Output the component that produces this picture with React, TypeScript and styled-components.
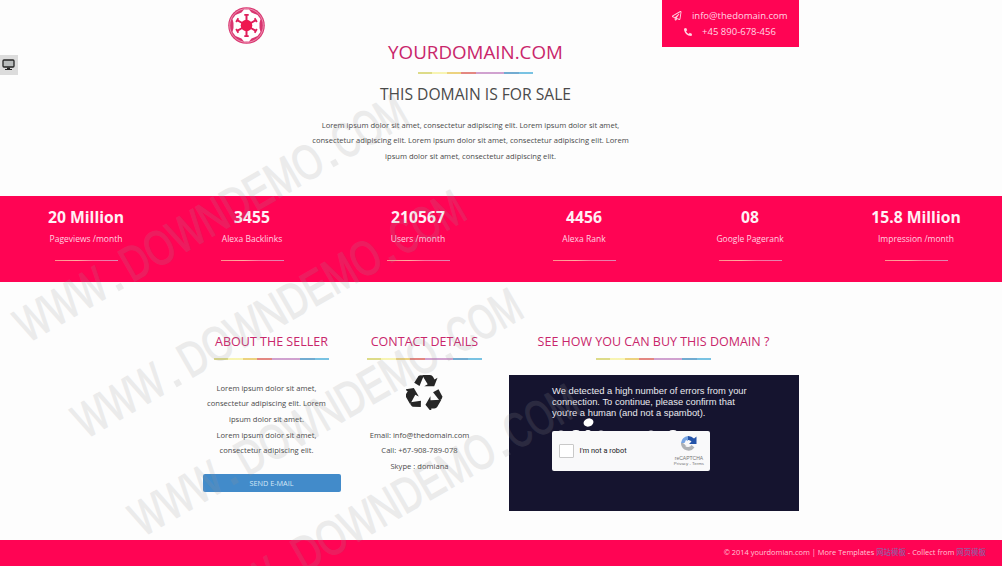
import React from 'react';
import styled, { createGlobalStyle } from 'styled-components';
import { FaRegPaperPlane, FaPhoneAlt } from 'react-icons/fa';

const GlobalStyle = createGlobalStyle`
  * { box-sizing: border-box; }
  body { margin: 0; background: #fdfdfd; }
  h1, h2, h3, p { margin: 0; font-weight: 400; }
`;

const Page = styled.div`
  position: relative;
  width: 1002px;
  height: 566px;
  overflow: hidden;
  display: flex;
  flex-direction: column;
  font-family: 'Open Sans', 'Noto Sans CJK SC', sans-serif;
  color: #4a4a4a;
`;

const Header = styled.header`
  height: 195.5px;
  flex: none;
  display: grid;
  grid-template-columns: 102px 341px 137px;
  column-gap: 0;
  padding-left: 203px;
  & > :last-child { margin-left: 15.5px; width: 137px; }
`;

const LogoCell = styled.div`
  padding: 7px 0 0 25px;
`;

const Intro = styled.div`
  display: flex;
  flex-direction: column;
  align-items: center;
  padding-top: 38px;
`;

const Title = styled.h1`
  font-size: 18.75px;
  line-height: 28px;
  color: #c9266b;
  white-space: nowrap;
`;

const Subtitle = styled.h2`
  font-size: 15.65px;
  line-height: 22px;
  margin-top: 9px;
  white-space: nowrap;
`;

const Rule = styled.div<{ $top: number }>`
  width: 115px;
  height: 2px;
  flex: none;
  margin-top: ${p => p.$top}px;
  opacity: 0.8;
  background: linear-gradient(90deg, #d5d36b 0 12.5%, #f6f2a0 12.5% 25%, #e8c860 25% 37.5%, #dd6a62 37.5% 50%, #c58bc4 50% 75%, #4f97c6 75% 88%, #58b4dc 88%);
`;

const Copy = styled.p<{ $top: number }>`
  margin-top: ${p => p.$top}px;
  padding-right: 10px;
  font-size: 7.6px;
  line-height: 15.7px;
  text-align: center;
  white-space: nowrap;
`;

const ContactBox = styled.address`
  height: 47px;
  padding-top: 8px;
  background: #ff0454;
  color: #ffd6e3;
  font-style: normal;
  font-size: 9.5px;
  line-height: 16px;
`;

const ContactLine = styled.div<{ $gap: number }>`
  display: flex;
  align-items: center;
  justify-content: center;
  gap: ${p => p.$gap}px;
  white-space: nowrap;
`;

const Stats = styled.section`
  height: 86px;
  flex: none;
  display: grid;
  grid-template-columns: repeat(6, 166px);
  padding-left: 3px;
  background: #ff0454;
  color: #ffd3e0;
`;

const Stat = styled.div`
  display: flex;
  flex-direction: column;
  align-items: center;
  padding-top: 10px;
`;

const StatValue = styled.strong`
  font-size: 15.7px;
  line-height: 22px;
  color: #fff0f5;
`;

const StatLabel = styled.span`
  margin-top: 4.5px;
  font-size: 8.5px;
  line-height: 14px;
`;

const StatRule = styled.div`
  width: 63px;
  height: 1px;
  margin-top: 14px;
  background: linear-gradient(90deg, #ff8f8d, #ffb0a0 35%, #ff6f9d 60%, #d98bb5);
`;

const Details = styled.main`
  flex: 1;
  display: grid;
  grid-template-columns: 138px 138px 290px;
  column-gap: 15px;
  padding: 50.5px 0 0 202.5px;
`;

const Column = styled.section`
  display: flex;
  flex-direction: column;
  align-items: center;
`;

const Heading = styled.h3`
  font-size: 12.5px;
  line-height: 20px;
  color: #c9266b;
  white-space: nowrap;
`;

const MailButton = styled.button`
  width: 138px;
  height: 18px;
  margin-top: 15px;
  padding: 0;
  border: 0;
  border-radius: 2px;
  background: #428bca;
  color: #d3e7f7;
  font: 7.3px/18px 'Open Sans', sans-serif;
`;

const RecycleIcon = styled.svg`
  width: 37px;
  height: 37px;
  margin-top: 13px;
  fill: #262626;
`;

const VideoPanel = styled.div`
  width: 290px;
  height: 136px;
  margin-top: 15.5px;
  padding: 9.5px 0 0 43.5px;
  background: #15142f;
  font-family: 'Liberation Sans', Arial, sans-serif;
`;

const Warning = styled.p`
  font-size: 9.4px;
  line-height: 11px;
  color: #e9e9ee;
  white-space: nowrap;
`;

const Sparks = styled.svg`
  display: block;
  width: 158px;
  height: 13.5px;
`;

const Captcha = styled.div`
  width: 158px;
  height: 39.5px;
  display: flex;
  align-items: center;
  padding: 0 6px 0 7px;
  border-radius: 2px;
  background: #f9f9fa;
`;

const CheckBox = styled.span`
  width: 15px;
  height: 14px;
  border: 1px solid #c9c9c9;
  border-radius: 1px;
  background: #fff;
`;

const CaptchaLabel = styled.span`
  flex: 1;
  padding-left: 5.5px;
  font: 7.35px/10px Roboto, sans-serif;
  color: #222;
`;

const CaptchaBrand = styled.div`
  display: flex;
  flex-direction: column;
  align-items: center;
  color: #777;
  font-size: 5px;
  line-height: 6px;
  svg { margin-bottom: 3px; }
  small { font-size: 4.4px; }
`;

const Footer = styled.footer`
  height: 26px;
  flex: none;
  padding-right: 16px;
  background: #ff0454;
  color: #ffc4d6;
  font-size: 7.45px;
  line-height: 25.5px;
  text-align: right;
  a { color: #9a5aa0; font-weight: 500; }
`;

const ScreenTab = styled.div`
  position: absolute;
  top: 55px;
  left: 0;
  width: 18px;
  height: 20px;
  padding: 4px 0 0 2px;
  background: #dcdcdc;
  svg { display: block; }
`;

const Watermark = styled.svg`
  position: absolute;
  inset: 0;
  pointer-events: none;
  font-family: 'Liberation Sans', Arial, sans-serif;
  font-size: 49px;
  fill: #969696;
  stroke: #969696;
  stroke-width: 1.3px;
  opacity: 0.17;
`;

const stats = [
  ['20 Million', 'Pageviews /month'],
  ['3455', 'Alexa Backlinks'],
  ['210567', 'Users /month'],
  ['4456', 'Alexa Rank'],
  ['08', 'Google Pagerank'],
  ['15.8 Million', 'Impression /month'],
];

const watermarkRows = [[10, 313], [68, 409], [125, 507], [182, 603]];
const watermarkParts: [string, number, number][] = [
  ['WWW', 0, 97],
  ['.', 101, 14],
  ['DOWNDEMO', 121, 226],
  ['.', 349, 14],
  ['COM', 365, 78],
];

const Logo = () => (
  <svg width="37" height="37" viewBox="-18.5 -18.5 37 37">
    <circle r="18.3" fill="#d93670" />
    <circle r="16.8" fill="none" stroke="#f5b5cb" strokeWidth="0.7" />
    <path d="M-2.500-16H2.500L5-13 11-10.500 14-6.500 13-2.500V2.500L14 6.500 11 10.500 5 13 2.500 16H-2.500L-5 13-11 10.500-14 6.500-13 2.500V-2.500L-14-6.500-11-10.500-5-13z" fill="#fff" />
    <circle r="5.800" fill="#ef174f" />
    {[0, 60, 120, 180, 240, 300].map(a => (
      <path key={a} transform={`rotate(${a})`} d="M-1-5V-9.800H-2.200V-11.600H2.200V-9.800H1V-5z" fill="#df1e5b" />
    ))}
  </svg>
);

const Recycle = () => (
  <RecycleIcon viewBox="-18.5 -18.5 37 37">
    {[0, 120, 240].map(a => (
      <g key={a} transform={`translate(0 1.500) rotate(${a})`}>
        <path d="M-10.300-10.200L-6-17Q-5-18-3-17.800L-1-16.700-5-7z" />
        <path d="M-2.500-18H5.500Q7.500-18 8.500-16.200L10-13.600 13-15.300 9.700-6.700H-.2L3.200-8.800z" />
      </g>
    ))}
  </RecycleIcon>
);

export default function App() {
  return (
    <Page>
      <GlobalStyle />
      <Header>
        <LogoCell><Logo /></LogoCell>
        <Intro>
          <Title>YOURDOMAIN.COM</Title>
          <Rule $top={6} />
          <Subtitle>THIS DOMAIN IS FOR SALE</Subtitle>
          <Copy $top={12.5}>
            Lorem ipsum dolor sit amet, consectetur adipiscing elit. Lorem ipsum dolor sit amet,<br />
            consectetur adipiscing elit. Lorem ipsum dolor sit amet, consectetur adipiscing elit. Lorem<br />
            ipsum dolor sit amet, consectetur adipiscing elit.
          </Copy>
        </Intro>
        <ContactBox>
          <ContactLine $gap={10}><FaRegPaperPlane size={9.5} />info@thedomain.com</ContactLine>
          <ContactLine $gap={10}><FaPhoneAlt size={8} />+45 890-678-456</ContactLine>
        </ContactBox>
      </Header>

      <Stats>
        {stats.map(([value, label]) => (
          <Stat key={label}>
            <StatValue>{value}</StatValue>
            <StatLabel>{label}</StatLabel>
            <StatRule />
          </Stat>
        ))}
      </Stats>

      <Details>
        <Column>
          <Heading>ABOUT THE SELLER</Heading>
          <Rule $top={5.500} />
          <Copy $top={21}>
            Lorem ipsum dolor sit amet,<br />
            consectetur adipiscing elit. Lorem<br />
            ipsum dolor sit amet.<br />
            Lorem ipsum dolor sit amet,<br />
            consectetur adipiscing elit.
          </Copy>
          <MailButton>SEND E-MAIL</MailButton>
        </Column>
        <Column>
          <Heading>CONTACT DETAILS</Heading>
          <Rule $top={5.500} />
          <Recycle />
          <Copy $top={18}>
            Email: info@thedomain.com<br />
            Call: +67-908-789-078<br />
            Skype : domiana
          </Copy>
        </Column>
        <Column>
          <Heading>SEE HOW YOU CAN BUY THIS DOMAIN ?</Heading>
          <Rule $top={5.500} />
          <VideoPanel>
            <Warning>
              We detected a high number of errors from your<br />
              connection. To continue, please confirm that<br />
              you're a human (and not a spambot).
            </Warning>
            <Sparks viewBox="0 0 158 13.500" fill="#fff">
              <ellipse cx="36.500" cy="4.500" rx="5" ry="4" transform="rotate(-20 36.500 4.500)" />
              <ellipse cx="9" cy="14" rx="3" ry="1.500" />
              <ellipse cx="24" cy="14" rx="4" ry="2" />
              <ellipse cx="36" cy="14" rx="3" ry="2" />
              <ellipse cx="49" cy="14" rx="3" ry="1.500" />
              <ellipse cx="99" cy="14" rx="3" ry="1.500" />
              <ellipse cx="121" cy="14" rx="4" ry="2" />
            </Sparks>
            <Captcha>
              <CheckBox />
              <CaptchaLabel>I'm not a robot</CaptchaLabel>
              <CaptchaBrand>
                <svg width="17" height="17" viewBox="0 0 17 17">
                  <path d="M1 8A7.500 7.500 0 0 1 8 1V6L6 5 4.500 8z" fill="#78a5e3" />
                  <path d="M8 1A8 8 0 0 1 14 3.500L16.500 1.500V9H9L11.500 6.500A4 4 0 0 0 8 5z" fill="#2453a8" />
                  <path d="M1 8L3 8 6.500 11 4.800 10.500A4 4 0 0 0 11.500 10L14.500 12.500A7.500 7.500 0 0 1 1 9z" fill="#aeb1b5" />
                </svg>
                <span>reCAPTCHA</span>
                <small>Privacy - Terms</small>
              </CaptchaBrand>
            </Captcha>
          </VideoPanel>
        </Column>
      </Details>

      <Footer>
        © 2014 yourdomian.com | More Templates <a>网站模板</a> - Collect from <a>网页模板</a>
      </Footer>

      <ScreenTab>
        <svg width="13" height="12" viewBox="0 0 13 12">
          <rect x="1" y="1" width="11" height="7" rx="1" fill="#b9bcbc" stroke="#252525" strokeWidth="1.300" />
          <path d="M5 8.500h3v1.500h2v1H3v-1h2z" fill="#252525" />
        </svg>
      </ScreenTab>

      <Watermark width="1002" height="566">
        {watermarkRows.map(([x, y]) => (
          <g key={x} transform={`translate(${x} ${y}) rotate(-30)`}>
            {watermarkParts.map(([text, start, length]) => (
              <text key={start} x={start} y="35" textLength={length} lengthAdjust="spacingAndGlyphs">{text}</text>
            ))}
          </g>
        ))}
      </Watermark>
    </Page>
  );
}
